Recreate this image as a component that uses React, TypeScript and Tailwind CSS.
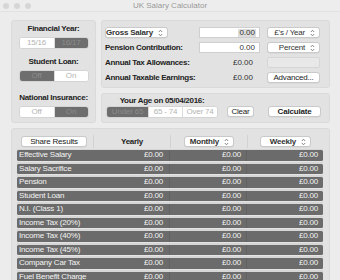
import React from 'react';

const font = { fontFamily: '"Liberation Sans", Arial, sans-serif' };

const Updown: React.FC = () => (
  <svg width="5" height="8" viewBox="0 0 5 8" className="shrink-0">
    <path d="M0.8 3 L2.5 1.2 L4.2 3 M0.8 5 L2.5 6.8 L4.2 5" fill="none" stroke="#777" strokeWidth="0.9" />
  </svg>
);

const Popup: React.FC<{ label: string; className?: string; bold?: boolean }> = ({ label, className = '', bold }) => (
  <div
    className={`h-[11px] bg-white border border-[#c9c9c9] rounded-[3px] flex items-center justify-end gap-[5px] pr-[4px] text-[8px] tracking-[-0.2px] whitespace-nowrap text-[#333] shadow-[0_0.5px_0.5px_rgba(0,0,0,0.08)] ${bold ? 'font-bold' : ''} ${className}`}
  >
    <span className="leading-none">{label}</span>
    <Updown />
  </div>
);

const Button: React.FC<{ label: string; className?: string; bold?: boolean }> = ({ label, className = '', bold }) => (
  <div
    className={`h-[11px] bg-white border border-[#c9c9c9] rounded-[3px] flex items-center justify-center text-[8px] tracking-[-0.2px] whitespace-nowrap text-[#222] leading-none shadow-[0_0.5px_0.5px_rgba(0,0,0,0.08)] ${bold ? 'font-bold' : ''} ${className}`}
  >
    {label}
  </div>
);

const Segment: React.FC<{ items: string[]; selected: number; widths: string[] }> = ({ items, selected, widths }) => (
  <div className="flex h-[12px] rounded-[3px] overflow-hidden border border-[#d4d4d4] bg-white">
    {items.map((it, i) => (
      <div
        key={it}
        className={`${widths[i]} flex items-center justify-center text-[8px] tracking-[-0.2px] whitespace-nowrap leading-none ${
          i === selected ? 'bg-[#6e6e6e] text-[#8c8c8c]' : 'bg-white text-[#b4b4b4]'
        } ${i > 0 ? 'border-l border-[#dcdcdc]' : ''}`}
      >
        {it}
      </div>
    ))}
  </div>
);

const label = 'text-[8px] font-bold tracking-[-0.3px] whitespace-nowrap text-[#222] leading-none';

const rows = [
  'Effective Salary',
  'Salary Sacrifice',
  'Pension',
  'Student Loan',
  'N.I. (Class 1)',
  'Income Tax (20%)',
  'Income Tax (40%)',
  'Income Tax (45%)',
  'Company Car Tax',
  'Fuel Benefit Charge',
];

export default function App() {
  return (
    <div className="w-[340px] h-[280px] overflow-hidden bg-[#ececec] flex flex-col" style={font}>
      {/* title bar */}
      <div className="h-[12px] shrink-0 relative flex items-center justify-center border-b border-[#e2e2e2] bg-[#ededed]">
        <div className="absolute left-[3px] top-[3px] flex gap-[5px]">
          <div className="w-[6px] h-[6px] rounded-full bg-[#d6d6d6]" />
          <div className="w-[6px] h-[6px] rounded-full bg-[#d6d6d6]" />
          <div className="w-[6px] h-[6px] rounded-full bg-[#d6d6d6]" />
        </div>
        <span className="text-[8px] text-[#9a9a9a] leading-none">UK Salary Calculator</span>
      </div>

      <div className="flex flex-col pl-[11px] pr-[10px] pt-[8px] gap-[5px]">
        {/* top section */}
        <div className="flex gap-[5px]">
          {/* left panel */}
          <div className="w-[85px] h-[103px] bg-[#e2e2e2] border border-[#dadada] rounded-[3px] flex flex-col items-center">
            <div className={`mt-[4px] h-[11px] leading-[11px] ${label}`}>Financial Year:</div>
            <div className="mt-[1px]">
              <Segment items={['15/16', '16/17']} selected={1} widths={['w-[34px]', 'w-[34px]']} />
            </div>
            <div className={`mt-[9px] h-[11px] leading-[11px] ${label}`}>Student Loan:</div>
            <div className="mt-[1px]">
              <Segment items={['Off', 'On']} selected={0} widths={['w-[34px]', 'w-[34px]']} />
            </div>
            <div className={`mt-[12px] h-[11px] leading-[11px] ${label}`}>National Insurance:</div>
            <div className="mt-[1px]">
              <Segment items={['Off', 'On']} selected={1} widths={['w-[34px]', 'w-[34px]']} />
            </div>
          </div>

          {/* right column */}
          <div className="flex-1 flex flex-col gap-[5px]">
            <div className="h-[68px] bg-[#e2e2e2] border border-[#dadada] rounded-[3px] pl-[3px] pt-[6px] flex flex-col gap-[4px]">
              <div className="flex items-center h-[11px]">
                <div className="w-[94px]">
                  <Popup label="Gross Salary" bold className="w-[63px]" />
                </div>
                <div className="w-[61px] h-[11px] bg-white border border-[#cfcfcf] flex items-center justify-end pr-[3px]">
                  <span className="text-[8px] leading-none text-[#333] bg-[#dcdcdc] px-[1px]">0.00</span>
                </div>
                <Popup label="£'s / Year" className="w-[53px] ml-[7px]" />
              </div>
              <div className="flex items-center h-[11px]">
                <div className={`w-[94px] ${label}`}>Pension Contribution:</div>
                <div className="w-[61px] h-[11px] bg-white border border-[#cfcfcf] flex items-center justify-end pr-[4px]">
                  <span className="text-[8px] leading-none text-[#333]">0.00</span>
                </div>
                <Popup label="Percent" className="w-[53px] ml-[7px]" />
              </div>
              <div className="flex items-center h-[11px]">
                <div className={`w-[94px] ${label}`}>Annual Tax Allowances:</div>
                <div className="w-[61px] text-right pr-[7px] text-[8px] leading-none text-[#333]">£0.00</div>
                <div className="w-[53px] ml-[7px] h-[11px] bg-[#e8e8e8] border border-[#d6d6d6] rounded-[2px]" />
              </div>
              <div className="flex items-center h-[11px]">
                <div className={`w-[94px] ${label}`}>Annual Taxable Earnings:</div>
                <div className="w-[61px] text-right pr-[7px] text-[8px] leading-none text-[#333]">£0.00</div>
                <Button label="Advanced..." className="w-[53px] ml-[7px]" />
              </div>
            </div>

            <div className="h-[30px] bg-[#e2e2e2] border border-[#dadada] rounded-[3px] pl-[4px] flex items-end pb-[4px]">
              <div className="flex flex-col items-center">
                <div className={`leading-[11px] mb-[1px] ${label}`}>Your Age on 05/04/2016:</div>
                <Segment
                  items={['Under 65', '65 - 74', 'Over 74']}
                  selected={0}
                  widths={['w-[41px]', 'w-[34px]', 'w-[35px]']}
                />
              </div>
              <Button label="Clear" className="w-[27px] ml-[9px] mb-[1px]" />
              <Button label="Calculate" bold className="w-[53px] ml-[14px] mb-[1px]" />
            </div>
          </div>
        </div>

        {/* results table */}
        <div className="bg-[#e2e2e2] border border-[#dadada] rounded-[3px] pl-[5px] pr-[6px] pt-[6px] h-[200px]">
          <div className="flex h-[13px] items-center">
            <div className="w-[76px] h-full flex items-center pl-[4px]">
              <Button label="Share Results" className="w-[66px]" />
            </div>
            <div className={`w-[77px] h-full border-l border-[#d2d2d2] flex items-center justify-center ${label}`}>
              Yearly
            </div>
            <div className="w-[77px] h-full border-l border-[#d2d2d2] flex items-center justify-center">
              <Popup label="Monthly" bold className="w-[50px]" />
            </div>
            <div className="flex-1 h-full border-l border-[#d2d2d2] flex items-center justify-center">
              <Popup label="Weekly" bold className="w-[51px]" />
            </div>
          </div>
          <div className="flex flex-col gap-[3px] mt-[1px] pt-[1px] bg-[#d6d6d6]">
            {rows.map((r) => (
              <div
                key={r}
                className="flex h-[10.5px] bg-[#6b6b6b] rounded-[1.5px] shadow-[0_0.5px_0_#f2f2f2] text-[8px] tracking-[-0.2px] leading-none text-[#f4f4f4]"
              >
                <div className="w-[76px] flex items-center pl-[2px] whitespace-nowrap">{r}</div>
                <div className="w-[77px] flex items-center justify-end pr-[6px] border-r border-[#626262]">£0.00</div>
                <div className="w-[77px] flex items-center justify-end pr-[5px] border-r border-[#626262]">£0.00</div>
                <div className="flex-1 flex items-center justify-end pr-[5px]">£0.00</div>
              </div>
            ))}
          </div>
        </div>
      </div>
    </div>
  );
}
